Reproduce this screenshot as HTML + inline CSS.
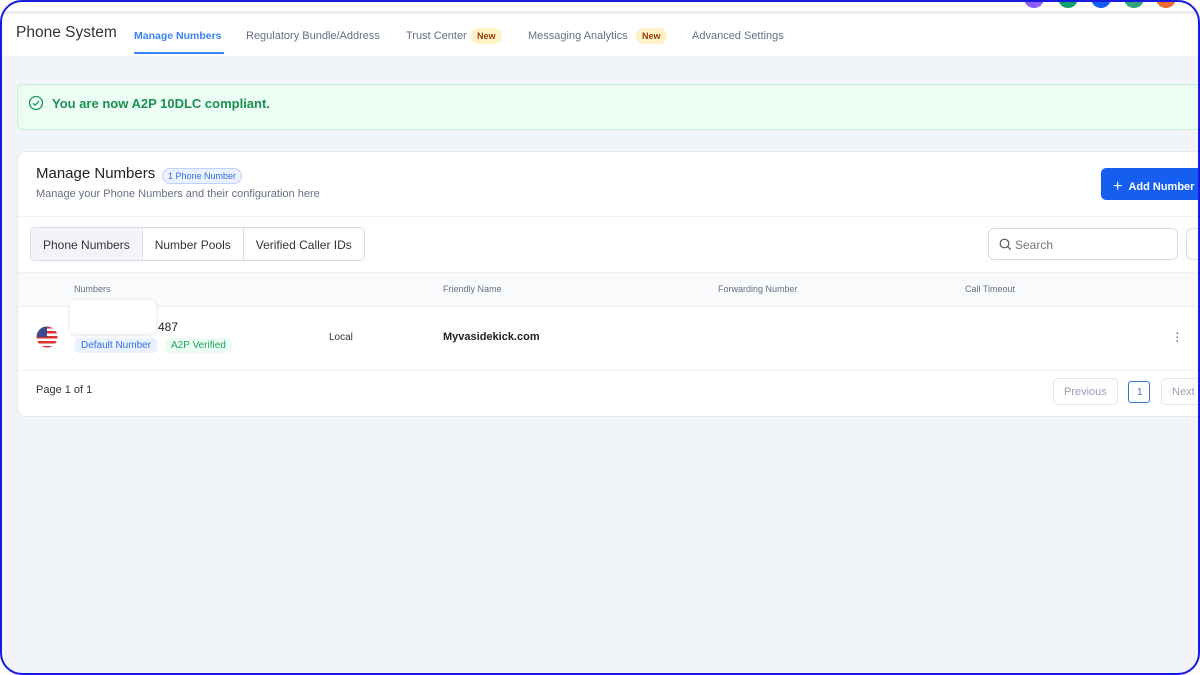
<!DOCTYPE html>
<html><head><style>
*{box-sizing:border-box;margin:0;padding:0}
body{width:1200px;height:675px;overflow:hidden;background:#f1f5f9;font-family:"Liberation Sans",sans-serif;position:relative}
.frame{position:absolute;inset:0;border:2px solid #1a1adf;border-radius:22px;box-shadow:0 0 0 30px #fff;z-index:10;pointer-events:none}
.abs{position:absolute}
.top{left:0;top:0;width:1200px;height:13px;background:#fff;border-bottom:2px solid #ececec}
.nav{left:0;top:15px;width:1200px;height:41px;background:#fff}
.dot{width:20px;height:20px;border-radius:50%;top:-12px}
.t{font-size:11px;color:#667085;top:15px}
.new{background:#fef3c7;color:#92400e;font-size:9px;padding:3px 6px;border-radius:8px;font-weight:bold}
.card{left:17px;top:151px;width:1190px;height:266px;background:#fff;border-radius:8px;border:1px solid #e5e7eb}
</style></head><body>
<div class="abs top"></div>
<div class="abs dot" style="left:1024px;background:#8b5cf6"></div>
<div class="abs dot" style="left:1058px;background:#10a06a"></div>
<div class="abs dot" style="left:1091px;background:#155eef"></div>
<div class="abs dot" style="left:1124px;background:#2da77a"></div>
<div class="abs dot" style="left:1156px;background:#f06b32"></div>
<div class="abs nav">
 <div class="abs" style="left:16px;top:9px;font-size:15.5px;color:#333">Phone System</div>
 <div class="abs t" style="left:134px;color:#3b82f6;font-weight:bold;font-size:10.5px">Manage Numbers</div>
 <div class="abs" style="left:134px;top:37px;width:90px;height:2px;background:#3b82f6"></div>
 <div class="abs t" style="left:246px">Regulatory Bundle/Address</div>
 <div class="abs t" style="left:406px">Trust Center</div>
 <div class="abs new" style="left:471px;top:13px">New</div>
 <div class="abs t" style="left:528px">Messaging Analytics</div>
 <div class="abs new" style="left:636px;top:13px">New</div>
 <div class="abs t" style="left:692px">Advanced Settings</div>
</div>
<div class="abs" style="left:17px;top:84px;width:1200px;height:46px;background:#ecfdf3;border:1px solid #c4f0d8;border-radius:6px">
 <svg class="abs" style="left:10px;top:10px" width="16" height="16" viewBox="0 0 16 16"><circle cx="8" cy="8" r="6.5" fill="none" stroke="#1d9a5c" stroke-width="1.3"/><path d="M5 8.2l2 2 4-4" fill="none" stroke="#1d9a5c" stroke-width="1.3"/></svg>
 <div class="abs" style="left:34px;top:11px;font-size:13px;font-weight:bold;color:#1d8f55">You are now A2P 10DLC compliant.</div>
</div>
<div class="abs card">
 <div class="abs" style="left:18px;top:13px;font-size:15px;color:#222">Manage Numbers</div>
 <div class="abs" style="left:144px;top:16px;font-size:9px;color:#3b6fd8;background:#eaf1ff;border:1px solid #bcd2fb;border-radius:9px;padding:2px 5px">1 Phone Number</div>
 <div class="abs" style="left:18px;top:36px;font-size:11px;color:#667085">Manage your Phone Numbers and their configuration here</div>
 <div class="abs" style="left:1083px;top:16px;width:120px;height:32px;background:#155eef;border-radius:5px;color:#fff;font-size:11px;font-weight:bold;padding:9px 0 0 12px"><span style="font-size:16px;font-weight:normal;position:relative;top:1px">+</span>&nbsp;&nbsp;Add Number</div>
 <div class="abs" style="left:0;top:64px;width:1190px;height:1px;background:#eef0f3"></div>
 <div class="abs" style="left:12px;top:75px;height:34px;border:1px solid #d8dde3;border-radius:5px;display:flex;font-size:12px;color:#333;overflow:hidden">
  <div style="background:#f2f4f7;padding:10px 12px;border-right:1px solid #d8dde3">Phone Numbers</div>
  <div style="padding:10px 12px;border-right:1px solid #d8dde3">Number Pools</div>
  <div style="padding:10px 12px">Verified Caller IDs</div>
 </div>
 <div class="abs" style="left:970px;top:76px;width:190px;height:32px;border:1px solid #d8dde3;border-radius:6px;font-size:12px;color:#777;padding:9px 0 0 26px">Search
  <svg class="abs" style="left:10px;top:9px" width="13" height="13" viewBox="0 0 13 13"><circle cx="5.5" cy="5.5" r="4.3" fill="none" stroke="#555" stroke-width="1.2"/><path d="M8.7 8.7l3 3" stroke="#555" stroke-width="1.2"/></svg></div>
 <div class="abs" style="left:1168px;top:76px;width:30px;height:32px;border:1px solid #d8dde3;border-radius:6px"></div>
 <div class="abs" style="left:0;top:120px;width:1190px;height:35px;background:#f9fafb;border-top:1px solid #eef0f3;border-bottom:1px solid #eef0f3;font-size:9px;color:#667085">
  <span class="abs" style="left:56px;top:11px">Numbers</span>
  <span class="abs" style="left:425px;top:11px">Friendly Name</span>
  <span class="abs" style="left:700px;top:11px">Forwarding Number</span>
  <span class="abs" style="left:947px;top:11px">Call Timeout</span>
 </div>
 <svg class="abs" style="left:18px;top:174px" width="22" height="22" viewBox="0 0 22 22"><defs><clipPath id="c"><circle cx="11" cy="11" r="10.5"/></clipPath></defs><g clip-path="url(#c)"><rect width="22" height="22" fill="#fff"/><rect y="0" width="22" height="2.5" fill="#d33"/><rect y="5" width="22" height="2.5" fill="#d33"/><rect y="10" width="22" height="2.5" fill="#d33"/><rect y="15" width="22" height="2.5" fill="#d33"/><rect y="20" width="22" height="2.5" fill="#d33"/><rect width="11" height="11" fill="#3b4a8c"/></g></svg>
 <div class="abs" style="left:52px;top:148px;width:86px;height:34px;background:#fff;border-radius:6px;box-shadow:0 1px 4px rgba(0,0,0,.12)"></div>
 <div class="abs" style="left:140px;top:168px;font-size:12px;color:#222">487</div>
 <div class="abs" style="left:57px;top:186px;font-size:10px;color:#3b6fd8;background:#eaf1ff;border-radius:4px;padding:2px 6px">Default Number</div>
 <div class="abs" style="left:147px;top:186px;font-size:10px;color:#22a060;background:#ecfdf3;border-radius:4px;padding:2px 6px">A2P Verified</div>
 <div class="abs" style="left:311px;top:180px;font-size:10px;color:#333">Local</div>
 <div class="abs" style="left:425px;top:179px;font-size:11px;font-weight:bold;color:#222">Myvasidekick.com</div>
 <div class="abs" style="left:1157px;top:178px;font-size:14px;color:#555;line-height:4px">·<br>·<br>·</div>
 <div class="abs" style="left:0;top:218px;width:1190px;height:1px;background:#eef0f3"></div>
 <div class="abs" style="left:18px;top:232px;font-size:11px;color:#333">Page 1 of 1</div>
 <div class="abs" style="left:1035px;top:226px;width:65px;height:27px;border:1px solid #e3e6ea;border-radius:5px;font-size:11px;color:#98a2b3;padding:7px 0 0 10px">Previous</div>
 <div class="abs" style="left:1110px;top:229px;width:22px;height:22px;border:1px solid #3b6fd8;border-radius:3px;font-size:10px;color:#3b6fd8;padding:5px 0 0 8px">1</div>
 <div class="abs" style="left:1143px;top:226px;width:60px;height:27px;border:1px solid #e3e6ea;border-radius:5px;font-size:11px;color:#98a2b3;padding:7px 0 0 10px">Next</div>
</div>
<div class="frame"></div>
</body></html>
